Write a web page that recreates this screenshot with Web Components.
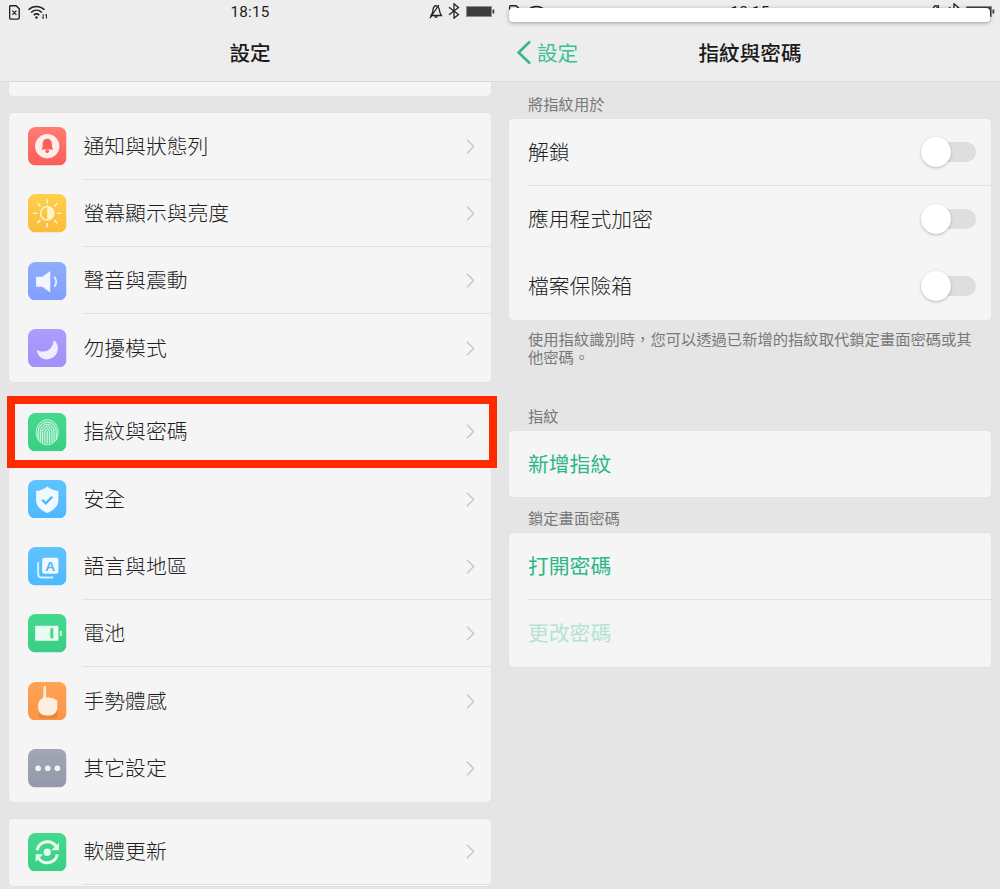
<!DOCTYPE html>
<html lang="zh-Hant">
<head>
<meta charset="utf-8">
<title>設定</title>
<style>
  html, body { margin: 0; height: 889px; overflow: hidden; background: #e5e5e5; }
  body {
    display: grid;
    grid-template-columns: 500px 500px;
    font-family: "Noto Sans CJK TC", "Liberation Sans", sans-serif;
    font-weight: 300;
    color: #1f1f1f;
  }
</style>
</head>
<body>

<phone-screen>
  <status-bar slot="top"></status-bar>
  <title-bar slot="top">設定</title-bar>

  <setting-card stub></setting-card>

  <setting-card>
    <setting-row line><app-icon slot="icon" name="bell"></app-icon>通知與狀態列</setting-row>
    <setting-row line><app-icon slot="icon" name="sun"></app-icon>螢幕顯示與亮度</setting-row>
    <setting-row line><app-icon slot="icon" name="sound"></app-icon>聲音與震動</setting-row>
    <setting-row><app-icon slot="icon" name="moon"></app-icon>勿擾模式</setting-row>
  </setting-card>

  <setting-card>
    <setting-row highlight><app-icon slot="icon" name="finger"></app-icon>指紋與密碼</setting-row>
    <setting-row><app-icon slot="icon" name="shield"></app-icon>安全</setting-row>
    <setting-row line><app-icon slot="icon" name="lang"></app-icon>語言與地區</setting-row>
    <setting-row line><app-icon slot="icon" name="battery"></app-icon>電池</setting-row>
    <setting-row><app-icon slot="icon" name="hand"></app-icon>手勢體感</setting-row>
    <setting-row><app-icon slot="icon" name="more"></app-icon>其它設定</setting-row>
  </setting-card>

  <setting-card>
    <setting-row line><app-icon slot="icon" name="update"></app-icon>軟體更新</setting-row>
  </setting-card>
</phone-screen>

<phone-screen>
  <status-bar slot="top" covered></status-bar>
  <title-bar slot="top" back="設定">指紋與密碼</title-bar>

  <section-label style="height:37px">將指紋用於</section-label>
  <setting-card flush>
    <plain-row line>解鎖<toggle-switch slot="end"></toggle-switch></plain-row>
    <plain-row>應用程式加密<toggle-switch slot="end"></toggle-switch></plain-row>
    <plain-row>檔案保險箱<toggle-switch slot="end"></toggle-switch></plain-row>
  </setting-card>
  <section-note>使用指紋識別時&#xFF0C;您可以透過已新增的指紋取代鎖定畫面密碼或其他密碼。</section-note>

  <section-label>指紋</section-label>
  <setting-card flush>
    <plain-row tone="on" style="--row-height:66px">新增指紋</plain-row>
  </setting-card>

  <section-label>鎖定畫面密碼</section-label>
  <setting-card flush>
    <plain-row line tone="on">打開密碼</plain-row>
    <plain-row tone="off">更改密碼</plain-row>
  </setting-card>
</phone-screen>

<script>
// Pantalla: barra fija arriba y contenido con las tarjetas debajo
class PhoneScreen extends HTMLElement {
  constructor() {
    super();
    this.attachShadow({ mode: "open" }).innerHTML = `
      <style>
        :host { display: flex; flex-direction: column; height: 889px; overflow: hidden; position: relative; }
        .top { background: #ededed; border-bottom: 1px solid #dadada; height: 81px; flex: none; }
        .content { padding: 0 9px; display: flex; flex-direction: column; }
      </style>
      <div class="top"><slot name="top"></slot></div>
      <div class="content"><slot></slot></div>`;
  }
}

class StatusBar extends HTMLElement {
  constructor() {
    super();
    const covered = this.hasAttribute("covered");
    this.attachShadow({ mode: "open" }).innerHTML = `
      <style>
        :host { display: grid; grid-template-columns: 1fr auto 1fr; align-items: center; height: 24px; padding: 0 5px; position: relative; color: #222; }
        .time { font: 400 15.2px Roboto, "Liberation Sans", sans-serif; letter-spacing: .2px; }
        .left, .right { display: flex; align-items: center; }
        .left { gap: 8px; margin-left: 4px; }
        .right { justify-content: flex-end; gap: 5px; padding-bottom: 2px; }
        svg { display: block; }
        .mask { position: absolute; left: 9px; right: 10px; top: 8px; height: 14px; background: #fff; border-radius: 4px; box-shadow: 0 1px 4px rgba(0,0,0,.35); }
      </style>
      <div class="left">
        <svg width="11" height="15" viewBox="0 0 11 15" fill="none" stroke="#222" stroke-width="1.400">
          <path d="M1.600.7h5.600l3 3v9.100a1.300 1.300 0 0 1-1.300 1.300H1.600a1.300 1.300 0 0 1-1-1.300V2a1.300 1.300 0 0 1 1-1.300z"/>
          <path stroke-width="1.200" d="M3.400 5.600l4 4.200m0-4.200l-4 4.200"/>
        </svg>
        <svg width="20" height="14" viewBox="0 0 20 14" fill="none" stroke="#222" stroke-width="1.600">
          <path d="M.5 4.800C5 .4 12 .4 16.500 4.800M3.100 7.500c3.200-3 7.600-3 10.800 0M5.700 10.100c1.700-1.500 3.900-1.500 5.600 0"/>
          <circle cx="8.500" cy="12.500" r="1.200" fill="#222" stroke="none"/>
          <path stroke-width="1" d="M15.200 9.200v4.400m-1.200-1.200l1.200 1.200M18.400 13.600V9.200m-1.200 1.200l1.200-1.200"/>
        </svg>
      </div>
      <div class="time">18:15</div>
      <div class="right">
        <svg width="14" height="15" viewBox="0 0 14 15" fill="none" stroke="#222" stroke-width="1.300">
          <path d="M2 11.500h10.500l-1.400-2.400-1-4.300C9.500 2.600 8.400 1.800 7.200 1.600 5.600 1.800 4.500 2.800 4.200 4.600L3.400 8.800z"/>
          <path d="M5.800 12.200c.2 1.600 2.200 1.600 2.500 0M1 14.200L9.800 1"/>
        </svg>
        <svg width="12" height="16" viewBox="0 0 12 16" fill="none" stroke="#222" stroke-width="1.300">
          <path d="M1 4.200l9.500 7.300L6 15.200V.8l4.500 3.700L1 11.800"/>
        </svg>
        <svg width="30" height="11" viewBox="0 0 30 11">
          <rect x="1.500" y=".5" width="25" height="10" fill="#3d3d3d" stroke="#8c8c8c"/>
          <rect x="27.500" y="3.500" width="1.800" height="4" fill="#3d3d3d"/>
        </svg>
      </div>
      ${covered ? '<div class="mask"></div>' : ''}`;
  }
}

class TitleBar extends HTMLElement {
  constructor() {
    super();
    const back = this.getAttribute("back");
    this.attachShadow({ mode: "open" }).innerHTML = `
      <style>
        :host { display: grid; grid-template-columns: 1fr auto 1fr; align-items: center; box-sizing: border-box; height: 58px; padding-bottom: 2px; font-size: 20.6px; font-weight: 500; color: #1a1a1a; }
        .back { display: flex; align-items: center; gap: 5px; padding-left: 16px; color: #3cbf95; font-weight: 400; }
        svg { display: block; }
      </style>
      <div class="back">${back ? `
        <svg width="16" height="25" viewBox="0 0 16 25" fill="none" stroke="#33b78d" stroke-width="2.600">
          <path d="M14 1.500L2.600 12.500 14 23.500"/>
        </svg><span>${back}</span>` : ''}</div>
      <div><slot></slot></div>
      <div></div>`;
  }
}

class SettingCard extends HTMLElement {
  constructor() {
    super();
    this.attachShadow({ mode: "open" }).innerHTML = `
      <style>
        :host { display: block; background: #f5f5f5; border-radius: 4px; margin-bottom: 16.3px; box-shadow: 0 0 1px rgba(0,0,0,.12); }
        :host([stub]) { height: 14px; border-radius: 0 0 4px 4px; margin-bottom: 17px; }
        :host([flush]) { margin-bottom: 0; }
      </style>
      <slot></slot>`;
  }
}

// Fila con icono, texto y flecha
class SettingRow extends HTMLElement {
  constructor() {
    super();
    this.attachShadow({ mode: "open" }).innerHTML = `
      <style>
        :host { display: flex; align-items: center; box-sizing: border-box; height: 67.3px; position: relative; font-size: 20.8px; padding: 0 0 .6px 19px; }
        .body { flex: 1; align-self: stretch; display: flex; align-items: center; justify-content: space-between; margin-left: 15px; padding: 0 16px 0 2px; }
        .text { padding-bottom: 3px; }
        :host([line]) .body { box-shadow: inset 0 -1px #e2e2e2; }
        svg { display: block; }
        .mark { position: absolute; left: -2px; right: -6px; top: -2.5px; height: 56px; border: 8px solid #ff2a00; }
      </style>
      <slot name="icon"></slot>
      <div class="body">
        <span class="text"><slot></slot></span>
        <svg width="9" height="15" viewBox="0 0 9 15" fill="none" stroke="#c8c8c8" stroke-width="1.500">
          <path d="M1 .8l6.600 6.700L1 14.200"/>
        </svg>
      </div>
      ${this.hasAttribute("highlight") ? '<div class="mark"></div>' : ''}`;
  }
}

// Fila sin icono de la pantalla de detalle
class PlainRow extends HTMLElement {
  constructor() {
    super();
    this.attachShadow({ mode: "open" }).innerHTML = `
      <style>
        :host { display: block; font-size: 20.8px; padding-left: 19px; }
        .body { box-sizing: border-box; height: var(--row-height, 67px); padding: 0 15px 1px 0; display: flex; align-items: center; justify-content: space-between; }
        .text { padding-bottom: 2px; }
        :host([line]) .body { box-shadow: inset 0 -1px #e2e2e2; }
        :host([tone="on"]) { color: #2cb68a; font-weight: 400; }
        :host([tone="off"]) { color: #b4e3d2; font-weight: 400; }
      </style>
      <div class="body"><span class="text"><slot></slot></span><slot name="end"></slot></div>`;
  }
}

class ToggleSwitch extends HTMLElement {
  constructor() {
    super();
    this.attachShadow({ mode: "open" }).innerHTML = `
      <style>
        :host { display: block; width: 55px; height: 20px; background: #dedede; border-radius: 10px; position: relative; }
        .knob { position: absolute; left: 0; top: -5px; width: 30px; height: 30px; border-radius: 50%; background: #fff; box-shadow: 0 1px 3px rgba(0,0,0,.25); }
      </style>
      <div class="knob"></div>`;
  }
}

class SectionLabel extends HTMLElement {
  constructor() {
    super();
    this.attachShadow({ mode: "open" }).innerHTML = `
      <style>
        :host { display: flex; align-items: flex-end; box-sizing: border-box; height: 36px; padding: 0 0 8px 19px; font-size: 15.3px; font-weight: 400; line-height: 16px; color: #787878; }
      </style>
      <slot></slot>`;
  }
}

class SectionNote extends HTMLElement {
  constructor() {
    super();
    this.attachShadow({ mode: "open" }).innerHTML = `
      <style>
        :host { display: block; padding: 9px 19px 0; margin-bottom: 30px; font-size: 15.3px; font-weight: 400; line-height: 18px; color: #787878; }
      </style>
      <slot></slot>`;
  }
}

const ICONS = {
  bell: ["#ff7c72", "#fb5d58", `
    <circle cx="19" cy="19" r="12" fill="#fdecea"/>
    <path fill="#f9625c" d="M19 11.500c-3 0-4.600 2.400-4.600 5.200v3l-1.400 2.500h12l-1.400-2.500v-3c0-2.800-1.600-5.200-4.600-5.200z"/>
    <circle cx="19" cy="24" r="1.800" fill="#f9625c"/>`],
  sun: ["#fed04c", "#fbbb3c", `
    <circle cx="19" cy="19" r="6.600" fill="none" stroke="#fff3c9" stroke-width="1.600"/>
    <path fill="#fff3c9" d="M19 12.400a6.600 6.600 0 0 1 0 13.200z"/>
    <path stroke="#fff3c9" stroke-width="1.600" stroke-linecap="round" d="M19 5.700v3M19 29.300v3M5.700 19h3M29.300 19h3M9.600 9.600l2.100 2.100M26.300 26.300l2.100 2.100M9.600 28.400l2.100-2.100M26.300 11.700l2.100-2.100"/>`],
  sound: ["#8fadfe", "#7f9ffc", `
    <path fill="#f2f5ff" d="M8 14.500h6L22 9v21l-8-5.500H8z"/>
    <path fill="none" stroke="#f2f5ff" stroke-width="1.600" d="M26 14.500c2.200 3 2.200 7 0 10"/>`],
  moon: ["#ac9dfd", "#9f90fb", `
    <path fill="#f1edff" d="M8.500 20.500C12 23.500 24 24 25.500 11c4.500 3 5 9 2.500 13.500C25 30 17 32 12.500 28c-2-1.500-3.500-4.500-4-7.500z"/>`],
  finger: ["#44d98e", "#38cf84", `
    <ellipse cx="19" cy="19" rx="11" ry="12.500" fill="#fff" fill-opacity=".18"/>
    <g fill="none" stroke="#e4fbef" stroke-width=".9">
      <ellipse cx="19" cy="19" rx="11" ry="12.500" stroke-opacity=".8"/>
      <path d="M10 27V18.500a9 9.500 0 0 1 18 0V27M12.200 28.500V18.500a6.800 7.300 0 0 1 13.600 0V28.500M14.400 29.500V18.500a4.600 5 0 0 1 9.200 0V29.500M16.700 30V18.500a2.300 2.700 0 0 1 4.600 0V30M19 30V18"/>
    </g>`],
  shield: ["#5fc3ff", "#4fb8fd", `
    <path fill="#eef8ff" d="M19 6.500C22 9 26 10.500 30 10.800V20c0 6-5 10-11 12.500C13 30 8 26 8 20v-9.200C12 10.500 16 9 19 6.500z"/>
    <path fill="none" stroke="#4fb4f5" stroke-width="2.200" d="M14 19.500l3.500 3.500 6.500-6.500"/>`],
  lang: ["#5fc3ff", "#4fb8fd", `
    <path fill="none" stroke="#d6efff" stroke-width="2" d="M10 15v12a3 3 0 0 0 3 3h12"/>
    <rect x="14" y="10.500" width="16" height="16" rx="2" fill="#f0f9ff"/>
    <text x="22" y="23.500" font-family="Liberation Sans, sans-serif" font-weight="700" font-size="13.500" text-anchor="middle" fill="#4fb4f5">A</text>`],
  battery: ["#44d98e", "#38cf84", `
    <rect x="7" y="11.500" width="23" height="15" rx="1" fill="#eafbf1"/>
    <rect x="22" y="14" width="3" height="10" fill="#44d98e"/>
    <rect x="31.500" y="16.500" width="1.700" height="5" fill="#eafbf1"/>`],
  hand: ["#ffa355", "#fb9347", `
    <path fill="#c9692a" fill-opacity=".35" d="M11 20h18v13a3 3 0 0 1-3 3H14a3 3 0 0 1-3-3z"/>
    <path fill="#fdeee0" d="M15.300 6c.2-3.300 2.300-3.300 2.500 0l.2 9.500c2-1 3.500-.5 4.500.5 1.500-.5 2.800 0 3.500 1 1.700-.2 3 1 3 2.800V25c0 4.500-3 8-7.500 8h-4C12.500 33 10 29.500 10 25v-3c0-2.500 2-5 5-6.500z"/>`],
  more: ["#a2a7b6", "#9399aa", `
    <circle cx="10" cy="19" r="2.800" fill="#f2f3f6"/>
    <circle cx="19.500" cy="19" r="2.800" fill="#f2f3f6"/>
    <circle cx="29" cy="19" r="2.800" fill="#f2f3f6"/>`],
  update: ["#44d98e", "#38cf84", `
    <g fill="none" stroke="#e6fbef" stroke-width="3">
      <path d="M9 17A10.300 10.300 0 0 1 27.500 13M29 21a10.300 10.300 0 0 1-18.500 4"/>
    </g>
    <path fill="#e6fbef" d="M30.500 9.500v7.500h-7.500zM7.500 28.500V21H15z"/>
    <circle cx="19" cy="19" r="3.600" fill="#e6fbef"/>`]
};

class AppIcon extends HTMLElement {
  constructor() {
    super();
    const [from, to, art] = ICONS[this.getAttribute("name")];
    const id = "g-" + this.getAttribute("name");
    this.attachShadow({ mode: "open" }).innerHTML = `
      <style>
        :host { display: block; width: 38.5px; height: 38.5px; flex: none; }
        svg { display: block; }
      </style>
      <svg width="38.5" height="38.5" viewBox="0 0 38 38">
        <defs>
          <linearGradient id="${id}" x1="0" y1="0" x2="0" y2="1">
            <stop offset="0" stop-color="${from}"/><stop offset="1" stop-color="${to}"/>
          </linearGradient>
          <clipPath id="c-${id}"><rect width="38" height="38" rx="7.500"/></clipPath>
        </defs>
        <g clip-path="url(#c-${id})">
          <rect width="38" height="38" fill="url(#${id})"/>
          ${art}
        </g>
      </svg>`;
  }
}

customElements.define("phone-screen", PhoneScreen);
customElements.define("status-bar", StatusBar);
customElements.define("title-bar", TitleBar);
customElements.define("setting-card", SettingCard);
customElements.define("setting-row", SettingRow);
customElements.define("plain-row", PlainRow);
customElements.define("toggle-switch", ToggleSwitch);
customElements.define("section-label", SectionLabel);
customElements.define("section-note", SectionNote);
customElements.define("app-icon", AppIcon);
</script>
</body>
</html>
